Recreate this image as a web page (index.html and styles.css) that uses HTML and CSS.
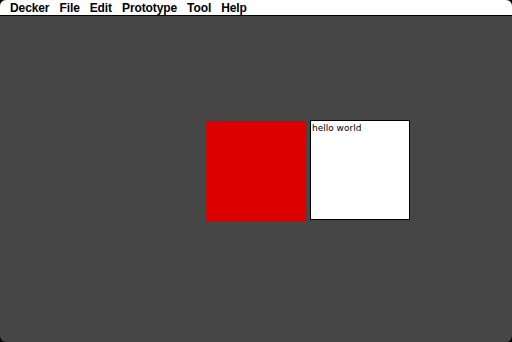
FILE: index.html
```html
<!DOCTYPE html>
<html>
<head>
<meta charset="utf-8">
<link rel="stylesheet" href="styles.css">
</head>
<body>
<div class="screen">
  <div class="menubar">
    <span class="menu">Decker</span>
    <span class="menu">File</span>
    <span class="menu">Edit</span>
    <span class="menu">Prototype</span>
    <span class="menu">Tool</span>
    <span class="menu">Help</span>
  </div>
  <div class="card">
    <div class="widget canvas-red"></div>
    <div class="widget field">hello world</div>
  </div>
</div>
</body>
</html>
```
FILE: styles.css
```css
html, body {
  margin: 0;
  padding: 0;
  background: #000;
}
.screen {
  width: 512px;
  height: 342px;
  border-radius: 6px;
  overflow: hidden;
  background: #464646;
  display: flex;
  flex-direction: column;
}
.menubar {
  box-sizing: border-box;
  height: 16px;
  padding: 1px 0 0 10px;
  background: #fff;
  border-bottom: 1px solid #000;
  display: flex;
  align-items: center;
  gap: 10px;
  font-family: "Liberation Sans", Arial, sans-serif;
  font-weight: bold;
  font-size: 12px;
  letter-spacing: -0.1px;
  color: #000;
  line-height: 14px;
}
.menu {
  white-space: nowrap;
}
.card {
  position: relative;
  flex: 1;
}
.widget {
  position: absolute;
  box-sizing: border-box;
}
.canvas-red {
  left: 206px;
  top: 105px;
  width: 100px;
  height: 100px;
  background: #dd0000;
}
.field {
  left: 310px;
  top: 104px;
  width: 100px;
  height: 100px;
  background: #fff;
  border: 1px solid #000;
  padding: 1px 1px;
  font-family: "DejaVu Sans", sans-serif;
  font-size: 9px;
  line-height: 12px;
  color: #000;
}
```
